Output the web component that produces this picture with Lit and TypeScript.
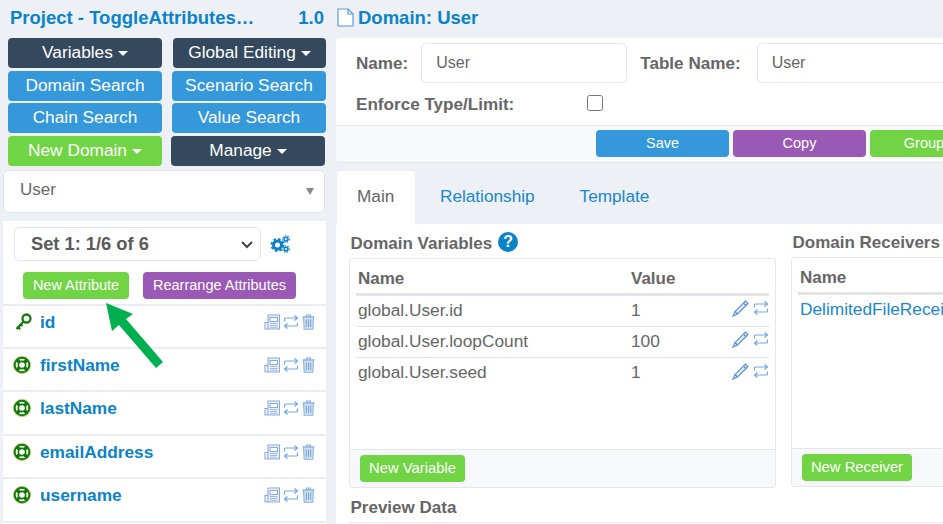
import { LitElement, html, css, svg } from "lit";
import { customElement } from "lit/decorators.js";

const attrs = ["id", "firstName", "lastName", "emailAddress", "username"];
const vars: [string, string][] = [["global.User.id", "1"], ["global.User.loopCount", "100"], ["global.User.seed", "1"]];

const caret = html`<span class="caret"></span>`;

const tableIcon = html`<svg class="ic" width="16" height="16" viewBox="0 0 16 16" fill="none" stroke="#8aaae0" stroke-width="1.100">
  <path d="M4 8V1h11.500v14H1V8.500h3V14.500" fill="#f0f4fb"/><rect x="6" y="3.500" width="7.500" height="4" fill="#fff"/><path d="M6 9.500h7.500M6 11.500h7.500M6 13.200h7.500" stroke="#9db9e6"/></svg>`;
const swapIcon = html`<svg class="ic" width="16" height="16" viewBox="0 0 16 16" fill="none" stroke="#78a5e4" stroke-width="1.200">
  <path d="M1.500 7.500V5q0-1 1-1H14M11.500 1.500L14.500 4l-3 2.500M14.500 8.500V11q0 1-1 1H2M4.500 9.500L1.500 12l3 2.500"/></svg>`;
const trashIcon = html`<svg class="ic" width="13" height="16" viewBox="0 0 13 16" fill="#cfe0f3" stroke="#8fb3dd" stroke-width="1.100">
  <path d="M.5 2.800h12M4.500 2.800V1h4v1.800M1.500 3.200l.7 12h8.600l.7-12z"/><path d="M4.300 5.500v7.500M6.500 5.500v7.500M8.700 5.500v7.500" stroke="#7fa6d4"/></svg>`;
const pencilIcon = html`<svg class="ic" width="17" height="17" viewBox="0 0 17 17" fill="#e3edf9" stroke="#5f93d8" stroke-width="1.200">
  <path d="M13.500 1l2.500 2.500L5.500 14 1 16l2-4.500z"/><path d="M11.500 3l2.500 2.500M3 11.500l2.500 2.500"/></svg>`;
const keyIcon = html`<svg class="key" width="17" height="18" viewBox="0 0 17 18" fill="none" stroke="#17780f" stroke-width="2.300">
  <circle cx="11.500" cy="5.500" r="4"/><path d="M8.500 8.500L1.500 16M2.800 13.800l2.300 2.300M5.500 11.200l1.800 1.800"/></svg>`;
const buoyIcon = html`<svg width="18" height="18" viewBox="0 0 18 18" fill="none">
  <circle cx="9" cy="9" r="8.700" stroke="#b7a83c" stroke-width=".6"/>
  <circle cx="9" cy="9" r="6" fill="#f6f3dc"/>
  <circle cx="9" cy="9" r="7.300" stroke="#0f7a0a" stroke-width="2"/>
  <path d="M3.800 3.800l3 3M14.200 3.800l-3 3M3.800 14.200l3-3M14.200 14.200l-3-3" stroke="#0f7a0a" stroke-width="3.400"/>
  <circle cx="9" cy="9" r="3.600" fill="#fff" stroke="#0f7a0a" stroke-width="1.600"/></svg>`;
const gearIcon = html`<svg width="20" height="18" viewBox="0 0 20 18" fill="none" stroke="#0d80c8">
  <circle cx="7.500" cy="10" r="4" stroke-width="3"/><circle cx="7.500" cy="10" r="6" stroke-width="2" stroke-dasharray="2.400 2.300"/>
  <circle cx="16" cy="4" r="1.800" stroke-width="1.500"/><circle cx="16" cy="4" r="3.200" stroke-width="1.200" stroke-dasharray="1.500 1.200"/>
  <circle cx="16" cy="14" r="1.800" stroke-width="1.500"/><circle cx="16" cy="14" r="3.200" stroke-width="1.200" stroke-dasharray="1.500 1.200"/></svg>`;
const docIcon = html`<svg width="17" height="19" viewBox="0 0 17 19" fill="#fff" stroke="#5b9bd5" stroke-width="1.200">
  <path d="M1 1h10l5 5v12H1z"/><path d="M11 1v5h5" fill="none"/></svg>`;
const chevron = html`<svg width="14" height="9" viewBox="0 0 14 9" fill="none" stroke="#444" stroke-width="2"><path d="M2 2l5 5 5-5"/></svg>`;

@customElement("app-root")
export class AppRoot extends LitElement {
  static styles = css`
    :host { display: block; width: 943px; height: 524px; overflow: hidden; position: relative;
      background: #edf0f5; font-family: "Liberation Sans", Arial, sans-serif; color: #666; }
    * { box-sizing: border-box; }
    .page { display: flex; height: 524px; }
    .left { width: 336px; flex: none; }
    .right { flex: 1; min-width: 0; overflow: hidden; }

    .title { height: 38px; display: flex; justify-content: space-between; align-items: center;
      padding: 0 12px 3px 10px; font-size: 18.500px; font-weight: 700; color: #0b83c9; white-space: nowrap; }
    .btns { display: flex; flex-direction: column; gap: 2.700px; padding-left: 8px; }
    .brow { display: flex; }
    .btn { display: flex; align-items: center; justify-content: center; height: 30px; border-radius: 4px; color: #fff;
      font-size: 17.300px; white-space: nowrap; width: 154px; padding-bottom: 1px; }
    .dark { background: #34495e; }
    .blue { background: #3498db; }
    .green { background: #70d444; }
    .purple { background: #9b59b6; }
    .g11 { margin-left: 11px; width: 153px; }
    .g10 { margin-left: 10px; }
    .g9 { margin-left: 9px; }
    .caret { display: inline-block; margin-left: 5px; margin-top: 2px; border: 5px solid transparent;
      border-top-color: #fff; border-bottom: 0; }
    .domain { margin: 3.500px 0 0 3px; width: 322px; height: 43px; background: #fff; border: 1px solid #dfe2e6; border-radius: 5px;
      display: flex; align-items: center; justify-content: space-between; padding: 0 11px 3px 16px; font-size: 17px; color: #666; }
    .tri { border: 4.500px solid transparent; border-top: 7px solid #888; border-bottom: 0; margin-top: 4px; margin-right: -1px; }

    .panel { margin: 8px 0 0 3px; width: 323px; background: #fff; height: 320px; }
    .setrow { display: flex; align-items: center; padding: 6.500px 0 0 11px; gap: 9px; }
    .setsel { width: 247px; height: 34px; border: 1px solid #e3e6ea; border-radius: 5px; display: flex; align-items: center;
      justify-content: space-between; padding: 0 6px 0 16px; font-size: 18.300px; font-weight: 700; color: #5a5a5a; }
    .attrbtns { display: flex; padding: 10.500px 0 0 20px; gap: 14px; }
    .sm { height: 27px; font-size: 14.500px; border-radius: 4px; }
    .w1 { width: 106px; } .w2 { width: 153px; }
    .attrs { margin-top: 5px; border-top: 2px solid #e9ecf0; }
    .attr { height: 43.400px; border-bottom: 2px solid #e9ecf0; display: flex; padding: 6px 11px 0 10px; align-items: flex-start; }
    .aic { width: 27px; display: flex; height: 20px; align-items: center; flex: none; }
    .key { margin-left: 2px; }
    .aname { flex: 1; font-size: 17.300px; font-weight: 700; color: #0b83c9; line-height: 20px; }
    .acts { display: flex; gap: 3px; align-items: center; padding-top: 2px; }
    .ic { display: block; flex: none; }

    .head { height: 38px; display: flex; align-items: center; gap: 4px; padding: 0 0 3px 1px; font-size: 18.500px; font-weight: 700; color: #0b83c9; }
    .card { width: 760px; background: #fff; border-radius: 4px; }
    .cbody { height: 88px; padding: 5px 20px 0; border-bottom: 1px solid #e4e7eb; }
    .frow { display: flex; align-items: center; height: 40px; }
    .lbl { font-size: 17.100px; font-weight: 700; color: #666; white-space: nowrap; padding-top: 2px; }
    .inp { height: 40px; border: 1px solid #e3e6ea; border-radius: 5px; display: flex; align-items: center; padding: 0 14px 1px; font-size: 16px; color: #666; }
    .i1 { width: 206px; margin-left: 13px; } .l2 { margin-left: 13px; } .i2 { width: 260px; margin-left: 16px; }
    .erow { display: flex; align-items: center; height: 42px; padding-bottom: 1px; }
    .chk { width: 16px; height: 16px; margin: -2px 0 0 73px; }
    .cfoot { height: 37px; background: #f7f8fa; padding: 4px 0 0 260px; display: flex; gap: 4px; border-radius: 0 0 4px 4px; border-bottom: 1px solid #e4e7eb; }
    .fbtn { width: 133px; height: 27px; font-size: 14.500px; }
    .fbtn.gr { width: 108px; }
    .tabs { display: flex; margin-top: 8px; height: 53px; align-items: stretch; padding-left: 1px; }
    .tab { display: flex; align-items: center; font-size: 17.200px; color: #1a86cf; padding: 0 20px 2px; }
    .tab.on { background: #fff; color: #666; border-radius: 4px 4px 0 0; width: 78px; margin-right: 5px; }
    .tab + .tab + .tab { padding-left: 25px; }
    .content { background: #fff; padding: 0 0 0 13px; height: 300px; width: 800px; }
    .cols { display: flex; gap: 15px; }
    .col1 { width: 427px; flex: none; }
    .col2 { width: 300px; flex: none; margin-top: -1px; }
    .sect { height: 34px; display: flex; align-items: center; gap: 6px; font-size: 17px; font-weight: 700; color: #666; padding: 5px 0 0 1.500px; white-space: nowrap; }
    .help { width: 20px; height: 20px; border-radius: 50%; background: #0b83c9; color: #fff; font-size: 16px; font-weight: 700;
      display: flex; align-items: center; justify-content: center; margin: 0 0 4px 0; }
    .box { border: 1px solid #e4e7eb; border-radius: 3px; height: 230px; display: flex; flex-direction: column; }
    .tbl { flex: 1; padding: 0 6px; }
    .thead, .trow { display: flex; align-items: center; padding-left: 2px; color: #666; }
    .thead { height: 37px; border-bottom: 3px solid #e2e4e8; font-weight: 700; padding-top: 5px; font-size: 17px; }
    .trow { height: 31.200px; border-bottom: 1px solid #e2e4e8; padding-bottom: 2px; font-size: 17.300px; }
    .trow:last-child { border-bottom: 0; }
    .cn { width: 273px; flex: none; }
    .cv { flex: 1; }
    .link { color: #1a86cf; white-space: nowrap; }
    .tacts { display: flex; gap: 4px; margin-top: -3px; }
    .bfoot { height: 38px; background: #f7f8fa; border-top: 1px solid #e4e7eb; padding: 5px 0 0 10px; }
    .b3 { width: 105px; height: 27px; font-size: 14.800px; }
    .b4 { width: 110px; height: 27px; font-size: 14.800px; }
    .preview { height: 35px; display: flex; align-items: center; font-size: 17px; font-weight: 700; color: #666; padding: 5px 0 0 1.500px; border-bottom: 1px solid #e4e7eb; width: 800px; }
    .arrow { position: absolute; left: 100px; top: 298px; }
  `;

  private attrRow(name: string, i: number) {
    return html`<div class="attr">
      <span class="aic">${i === 0 ? keyIcon : buoyIcon}</span>
      <span class="aname">${name}</span>
      <span class="acts">${tableIcon}${swapIcon}${trashIcon}</span>
    </div>`;
  }

  render() {
    return html`<div class="page">
      <div class="left">
        <div class="title"><span>Project - ToggleAttributes…</span><span>1.0</span></div>
        <div class="btns">
          <div class="brow"><div class="btn dark">Variables${caret}</div><div class="btn dark g11">Global Editing${caret}</div></div>
          <div class="brow"><div class="btn blue">Domain Search</div><div class="btn blue g10">Scenario Search</div></div>
          <div class="brow"><div class="btn blue">Chain Search</div><div class="btn blue g10">Value Search</div></div>
          <div class="brow"><div class="btn green">New Domain${caret}</div><div class="btn dark g9">Manage${caret}</div></div>
        </div>
        <div class="domain"><span>User</span><span class="tri"></span></div>
        <div class="panel">
          <div class="setrow"><div class="setsel"><span>Set 1: 1/6 of 6</span>${chevron}</div>${gearIcon}</div>
          <div class="attrbtns"><div class="btn green sm w1">New Attribute</div><div class="btn purple sm w2">Rearrange Attributes</div></div>
          <div class="attrs">${attrs.map((a, i) => this.attrRow(a, i))}</div>
        </div>
      </div>
      <div class="right">
        <div class="head">${docIcon}<span>Domain: User</span></div>
        <div class="card">
          <div class="cbody">
            <div class="frow"><span class="lbl">Name:</span><div class="inp i1">User</div><span class="lbl l2">Table Name:</span><div class="inp i2">User</div></div>
            <div class="erow"><span class="lbl">Enforce Type/Limit:</span><input class="chk" type="checkbox" /></div>
          </div>
          <div class="cfoot"><div class="btn blue fbtn">Save</div><div class="btn purple fbtn">Copy</div><div class="btn green fbtn gr">Group</div></div>
        </div>
        <div class="tabs"><div class="tab on">Main</div><div class="tab">Relationship</div><div class="tab">Template</div></div>
        <div class="content">
          <div class="cols">
            <div class="col1">
              <div class="sect">Domain Variables <span class="help">?</span></div>
              <div class="box">
                <div class="tbl">
                  <div class="thead"><span class="cn">Name</span><span class="cv">Value</span></div>
                  ${vars.map(([n, v]) => html`<div class="trow"><span class="cn">${n}</span><span class="cv">${v}</span><span class="tacts">${pencilIcon}${swapIcon}</span></div>`)}
                </div>
                <div class="bfoot"><div class="btn green b3">New Variable</div></div>
              </div>
            </div>
            <div class="col2">
              <div class="sect">Domain Receivers</div>
              <div class="box">
                <div class="tbl">
                  <div class="thead"><span class="cn">Name</span></div>
                  <div class="trow"><span class="cn link">DelimitedFileReceiver</span></div>
                </div>
                <div class="bfoot"><div class="btn green b4">New Receiver</div></div>
              </div>
            </div>
          </div>
          <div class="preview">Preview Data</div>
        </div>
      </div>
    </div>
    <svg class="arrow" width="70" height="75" viewBox="100 298 70 75">${svg`<path d="M106 303 L133 314 L126 319 L163 362 L156 368 L119 325 L112 331 Z" fill="#00b050"/>`}</svg>`;
  }
}
